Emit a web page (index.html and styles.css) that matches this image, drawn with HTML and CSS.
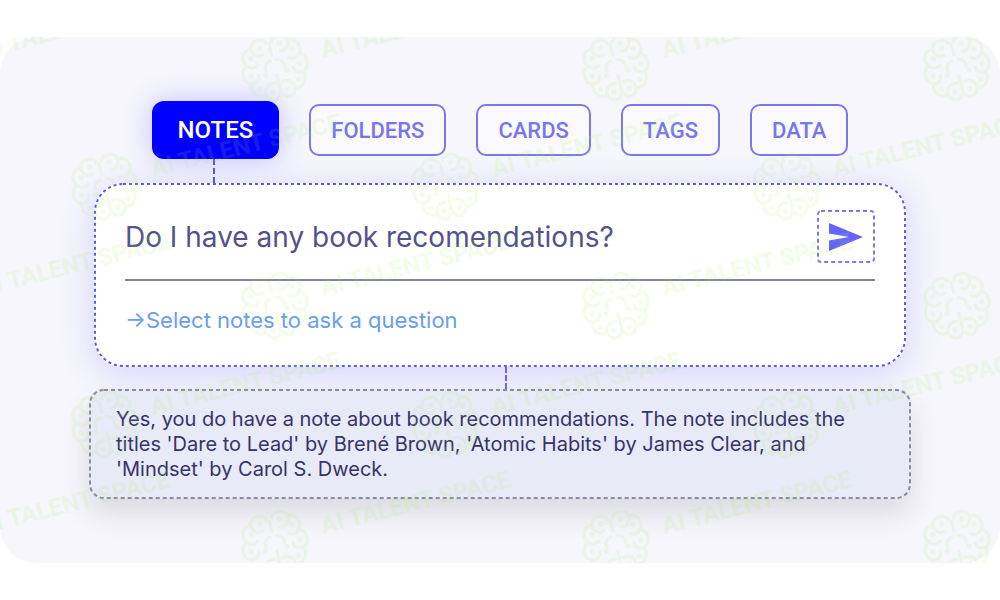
FILE: index.html
```html
<!DOCTYPE html>
<html lang="en">
<head>
    <meta charset="UTF-8">
    <meta name="viewport" content="width=device-width, initial-scale=1.0">
    <title>Ask your notes</title>
    <link rel="stylesheet" href="styles.css">
</head>
<body>
    <main class="panel">
        <nav class="tabs">
            <button class="tab active">NOTES</button>
            <button class="tab">FOLDERS</button>
            <button class="tab">CARDS</button>
            <button class="tab">TAGS</button>
            <button class="tab">DATA</button>
        </nav>

        <form class="ask-card">
            <svg class="outline" aria-hidden="true"><rect x="1" y="1" rx="28" /></svg>
            <div class="ask-row">
                <input type="text" class="ask-input" aria-label="Question" value="Do I have any book recomendations?">
                <button type="button" class="send-button" aria-label="Send">
                    <svg class="outline" aria-hidden="true"><rect x="1" y="1" rx="3" /></svg>
                    <svg class="send-icon" viewBox="0 0 34 28" aria-hidden="true">
                        <path d="M0 0L34 14L0 28V17.500L20 14L0 10.500Z" />
                    </svg>
                </button>
            </div>
            <a href="#" class="select-link">→Select notes to ask a question</a>
        </form>

        <div class="connector"></div>

        <section class="answer">
            <svg class="outline" aria-hidden="true"><rect x="1" y="1" rx="14" /></svg>
            <p>Yes, you do have a note about book recommendations. The note includes the titles 'Dare to Lead' by Brené Brown, 'Atomic Habits' by James Clear, and 'Mindset' by Carol S. Dweck.</p>
        </section>

        <!-- Repeating brand mark over the whole panel -->
        <svg class="watermark" aria-hidden="true">
            <defs>
                <g id="mark">
                    <g class="brain" transform="rotate(-14)">
                        <path d="M-2 -25C-6 -34 -18 -32 -19 -24C-28 -25 -32 -15 -27 -9C-35 -4 -34 7 -27 10C-29 19 -23 26 -15 24C-12 33 -4 33 -1 26" />
                        <path d="M2 -25C6 -34 18 -32 19 -24C28 -25 32 -15 27 -9C35 -4 34 7 27 10C29 19 23 26 15 24C12 33 4 33 1 26" />
                        <path d="M0 -25V-12M0 6V26M-27 -9C-24 -4 -18 -4 -15 -8M-19 -24C-19 -17 -13 -13 -8 -16M-2 -8C-8 -8 -11 -3 -9 2M-27 10C-21 11 -17 7 -18 2M-15 24C-15 17 -10 13 -3 15" />
                        <path d="M27 -9C24 -4 18 -4 15 -8M19 -24C19 -17 13 -13 8 -16M2 -8C8 -8 11 -3 9 2M27 10C21 11 17 7 18 2M15 24C15 17 10 13 3 15" />
                        <circle cx="-10" cy="-23" r="1" /><circle cx="10" cy="-23" r="1" />
                        <circle cx="-21" cy="-15" r="1" /><circle cx="21" cy="-15" r="1" />
                        <circle cx="-25" cy="2" r="1" /><circle cx="25" cy="2" r="1" />
                        <circle cx="-11" cy="5" r="1" /><circle cx="11" cy="5" r="1" />
                        <circle cx="-20" cy="17" r="1" /><circle cx="20" cy="17" r="1" />
                        <circle cx="-8" cy="23" r="1" /><circle cx="8" cy="23" r="1" />
                    </g>
                    <text transform="translate(48 -10) rotate(-14)">AI TALENT SPACE</text>
                </g>
            </defs>
            <use href="#mark" x="-66" y="31" />
            <use href="#mark" x="275" y="31" />
            <use href="#mark" x="616" y="31" />
            <use href="#mark" x="957" y="31" />
            <use href="#mark" x="-236" y="150" />
            <use href="#mark" x="105" y="150" />
            <use href="#mark" x="446" y="150" />
            <use href="#mark" x="787" y="150" />
            <use href="#mark" x="-66" y="269" />
            <use href="#mark" x="275" y="269" />
            <use href="#mark" x="616" y="269" />
            <use href="#mark" x="957" y="269" />
            <use href="#mark" x="-236" y="388" />
            <use href="#mark" x="105" y="388" />
            <use href="#mark" x="446" y="388" />
            <use href="#mark" x="787" y="388" />
            <use href="#mark" x="-66" y="507" />
            <use href="#mark" x="275" y="507" />
            <use href="#mark" x="616" y="507" />
            <use href="#mark" x="957" y="507" />
        </svg>
    </main>
</body>
</html>
```
FILE: styles.css
```css
* {
    margin: 0;
    padding: 0;
    box-sizing: border-box;
}

body {
    background-color: #fff;
    min-height: 100vh;
    display: flex;
    align-items: center;
    font-family: Inter, "Liberation Sans", sans-serif;
}

.panel {
    position: relative;
    width: 100%;
    padding: 64px 16px;
    background-color: #f6f6fc;
    border-radius: 36px;
    display: flex;
    flex-direction: column;
    align-items: center;
}

.tabs {
    display: flex;
    flex-wrap: wrap;
    justify-content: center;
    align-items: center;
    gap: 30px;
    margin-bottom: 24px;
}

.tab {
    height: 52px;
    padding: 0 20px;
    border: 2px solid #7b78ee;
    border-radius: 10px;
    background-color: #fafafc;
    color: #7875ee;
    font-family: Roboto, sans-serif;
    font-size: 22px;
    font-weight: 500;
    cursor: pointer;
}

.tab.active {
    position: relative;
    height: 58px;
    padding: 0 26px;
    border: none;
    border-radius: 12px;
    background-color: #0000fe;
    color: #fff;
    font-size: 24px;
    box-shadow: 0 0 28px rgba(60, 40, 255, 0.26);
}

/* line from the active tab down to the card */
.tab.active::after {
    content: "";
    position: absolute;
    top: 100%;
    left: 48%;
    height: 24px;
    border-left: 2px dashed #5a55e0;
}

.outline {
    position: absolute;
    top: 0;
    left: 0;
    width: 100%;
    height: 100%;
    pointer-events: none;
}

.outline rect {
    width: calc(100% - 2px);
    height: calc(100% - 2px);
    fill: none;
    stroke: #5f5ae6;
    stroke-width: 2px;
    stroke-dasharray: 3 3;
}

.ask-card {
    position: relative;
    width: 100%;
    max-width: 812px;
    padding: 27px 31px 34px;
    border-radius: 28px;
    background-color: #fff;
    box-shadow: 0 6px 34px rgba(80, 70, 255, 0.2);
}

.ask-row {
    display: flex;
    align-items: center;
    padding-bottom: 16px;
    border-bottom: 2px solid #858399;
    margin-bottom: 26px;
}

.ask-input {
    flex: 1;
    min-width: 0;
    height: 53px;
    border: none;
    outline: none;
    background: none;
    color: #55528a;
    font-family: inherit;
    font-size: 28px;
}

.send-button {
    position: relative;
    width: 58px;
    height: 53px;
    border: none;
    background: none;
    display: flex;
    justify-content: center;
    align-items: center;
    cursor: pointer;
}

.send-button rect {
    stroke: #7b78ee;
    stroke-dasharray: 4 3;
}

.send-icon {
    width: 34px;
    height: 28px;
    fill: #6664fa;
}

.select-link {
    display: block;
    color: #6b9df0;
    font-size: 22px;
    line-height: 26px;
    text-decoration: none;
}

.connector {
    width: 14px;
    height: 22px;
    border-right: 2px dashed #6f6bea;
}

.answer {
    position: relative;
    width: 100%;
    max-width: 822px;
    padding: 18px 48px 17px 27px;
    border-radius: 14px;
    background-color: #e8eaf7;
    box-shadow: 0 14px 28px rgba(60, 50, 60, 0.14);
    color: #37336b;
    font-size: 20px;
    line-height: 25px;
}

.answer rect {
    stroke: #8b8a98;
    stroke-dasharray: 4 3;
}

.watermark {
    position: absolute;
    top: 0;
    left: 0;
    width: 100%;
    height: 100%;
    overflow: hidden;
    pointer-events: none;
    opacity: 0.12;
}

.watermark text {
    fill: #a0f050;
    font-family: Roboto, sans-serif;
    font-size: 24px;
    font-weight: bold;
}

.brain {
    fill: none;
    stroke: #a0f050;
    stroke-width: 3;
}
```
